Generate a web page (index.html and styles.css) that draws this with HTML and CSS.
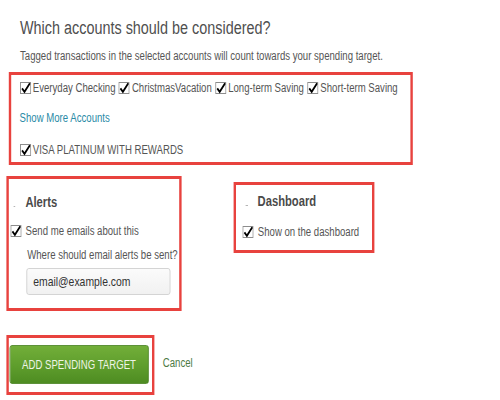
FILE: index.html
```html
<!DOCTYPE html>
<html>
<head>
<meta charset="utf-8">
<link rel="stylesheet" href="styles.css">
</head>
<body>
<div class="page">
  <h1 class="title">Which accounts should be considered?</h1>
  <p class="sub">Tagged transactions in the selected accounts will count towards your spending target.</p>

  <div class="box accounts">
    <div class="row">
      <label class="cb"><span class="tick"><svg viewBox="0 0 12 12" width="14" height="12" preserveAspectRatio="none"><rect x="0.5" y="0.5" width="11" height="11" fill="#fff" stroke="#8c8c8c"/><path d="M2.2 6.4 L4.8 9.8 L10.6 1.2" fill="none" stroke="#000" stroke-width="1.9"/></svg></span>Everyday Checking</label>
      <label class="cb"><span class="tick"><svg viewBox="0 0 12 12" width="14" height="12" preserveAspectRatio="none"><rect x="0.5" y="0.5" width="11" height="11" fill="#fff" stroke="#8c8c8c"/><path d="M2.2 6.4 L4.8 9.8 L10.6 1.2" fill="none" stroke="#000" stroke-width="1.9"/></svg></span>ChristmasVacation</label>
      <label class="cb"><span class="tick"><svg viewBox="0 0 12 12" width="14" height="12" preserveAspectRatio="none"><rect x="0.5" y="0.5" width="11" height="11" fill="#fff" stroke="#8c8c8c"/><path d="M2.2 6.4 L4.8 9.8 L10.6 1.2" fill="none" stroke="#000" stroke-width="1.9"/></svg></span>Long-term Saving</label>
      <label class="cb"><span class="tick"><svg viewBox="0 0 12 12" width="14" height="12" preserveAspectRatio="none"><rect x="0.5" y="0.5" width="11" height="11" fill="#fff" stroke="#8c8c8c"/><path d="M2.2 6.4 L4.8 9.8 L10.6 1.2" fill="none" stroke="#000" stroke-width="1.9"/></svg></span>Short-term Saving</label>
    </div>
    <a class="more" href="#">Show More Accounts</a>
    <div class="row visa">
      <label class="cb"><span class="tick"><svg viewBox="0 0 12 12" width="14" height="12" preserveAspectRatio="none"><rect x="0.5" y="0.5" width="11" height="11" fill="#fff" stroke="#8c8c8c"/><path d="M2.2 6.4 L4.8 9.8 L10.6 1.2" fill="none" stroke="#000" stroke-width="1.9"/></svg></span>VISA PLATINUM WITH REWARDS</label>
    </div>
  </div>

  <div class="panels">
    <div class="box alerts">
      <h2 class="head"><span class="dot"></span>Alerts</h2>
      <label class="cb line"><span class="tick"><svg viewBox="0 0 12 12" width="14" height="12" preserveAspectRatio="none"><rect x="0.5" y="0.5" width="11" height="11" fill="#fff" stroke="#8c8c8c"/><path d="M2.2 6.4 L4.8 9.8 L10.6 1.2" fill="none" stroke="#000" stroke-width="1.9"/></svg></span>Send me emails about this</label>
      <div class="where">Where should email alerts be sent?</div>
      <div class="input">email@example.com</div>
    </div>
    <div class="box dash">
      <h2 class="head"><span class="dot"></span>Dashboard</h2>
      <label class="cb line"><span class="tick"><svg viewBox="0 0 12 12" width="14" height="12" preserveAspectRatio="none"><rect x="0.5" y="0.5" width="11" height="11" fill="#fff" stroke="#8c8c8c"/><path d="M2.2 6.4 L4.8 9.8 L10.6 1.2" fill="none" stroke="#000" stroke-width="1.9"/></svg></span>Show on the dashboard</label>
    </div>
  </div>

  <div class="actions">
    <div class="box btnbox">
      <button class="btn">ADD SPENDING TARGET</button>
    </div>
    <a class="cancel" href="#">Cancel</a>
  </div>
</div>
</body>
</html>
```

FILE: styles.css
```css
html, body {
  margin: 0;
  padding: 0;
  background: #fff;
  overflow: hidden;
}
body {
  font-family: "Liberation Sans", Arial, sans-serif;
  color: #555;
  width: 500px;
  height: 400px;
}
/* the reference is rendered horizontally condensed (Arial Narrow look) */
.page {
  width: 540px;
  padding-top: 17px;
  transform: scaleX(0.8);
  transform-origin: 0 0;
}
.title {
  margin: 0 0 0 25px;
  font-size: 18px;
  line-height: 22px;
  font-weight: normal;
  color: #4f4f4f;
}
.sub {
  margin: 9px 0 0 25px;
  font-size: 12px;
  line-height: 16px;
}
.box {
  border: 3px solid #e8423e;
  box-sizing: border-box;
}
.accounts {
  margin: 8px 0 0 11px;
  width: 505px;
  padding: 5px 10px 4px 10.5px;
}
.row {
  display: flex;
  align-items: center;
  gap: 4px;
}
.cb {
  display: flex;
  align-items: center;
  font-size: 12px;
  line-height: 16px;
  color: #555;
}
.tick {
  display: inline-flex;
  width: 14px;
  height: 12px;
  margin-right: 2.5px;
}
.tick svg {
  display: block;
}
.more {
  display: block;
  margin-top: 14px;
  font-size: 12px;
  line-height: 16px;
  color: #2a8aa6;
  text-decoration: none;
}
.visa {
  margin-top: 16px;
}
.panels {
  display: flex;
  align-items: flex-start;
  margin: 11px 0 0 7.5px;
  gap: 65px;
}
.alerts {
  width: 219px;
  padding: 14px 0 13px 2.5px;
}
.head {
  display: flex;
  align-items: center;
  margin: 0;
  font-size: 14px;
  line-height: 18px;
  font-weight: bold;
  color: #4a4a4a;
}
.dot {
  display: inline-block;
  width: 2.5px;
  height: 1px;
  background: #b5b5b5;
  margin-top: 8px;
  margin-left: 3.75px;
  margin-right: 12.5px;
}
.alerts .line {
  margin-top: 12px;
}
.alerts .tick, .dash .tick {
  margin-right: 5px;
}
.where {
  margin: 8px 0 0 21px;
  font-size: 12px;
  line-height: 16px;
}
.input {
  margin: 5px 0 0 20px;
  width: 180px;
  height: 27px;
  box-sizing: border-box;
  border: 1px solid #cfcfcf;
  border-radius: 3px;
  background: linear-gradient(#fbfbfb, #f1f1f1);
  padding-left: 7.5px;
  font-size: 13px;
  line-height: 25px;
  color: #333;
}
.dash {
  width: 176px;
  margin-top: 6px;
  padding: 7px 0 10px 8.75px;
}
.dash .line {
  margin-top: 14px;
}
.actions {
  display: flex;
  align-items: center;
  margin: 24px 0 0 7.5px;
  gap: 11px;
}
.btnbox {
  width: 185px;
  padding: 7px 2px 8px 1.25px;
}
.btn {
  display: block;
  width: 174px;
  height: 39px;
  border: 1px solid #4b8423;
  border-radius: 3px;
  background: linear-gradient(#72ae39, #5e9d2c 55%, #4e8c22);
  color: #eef4e6;
  font-family: inherit;
  font-size: 12px;
  padding: 0;
}
.cancel {
  font-size: 12px;
  color: #4d7a45;
  text-decoration: none;
  margin-top: -4px;
}
```
